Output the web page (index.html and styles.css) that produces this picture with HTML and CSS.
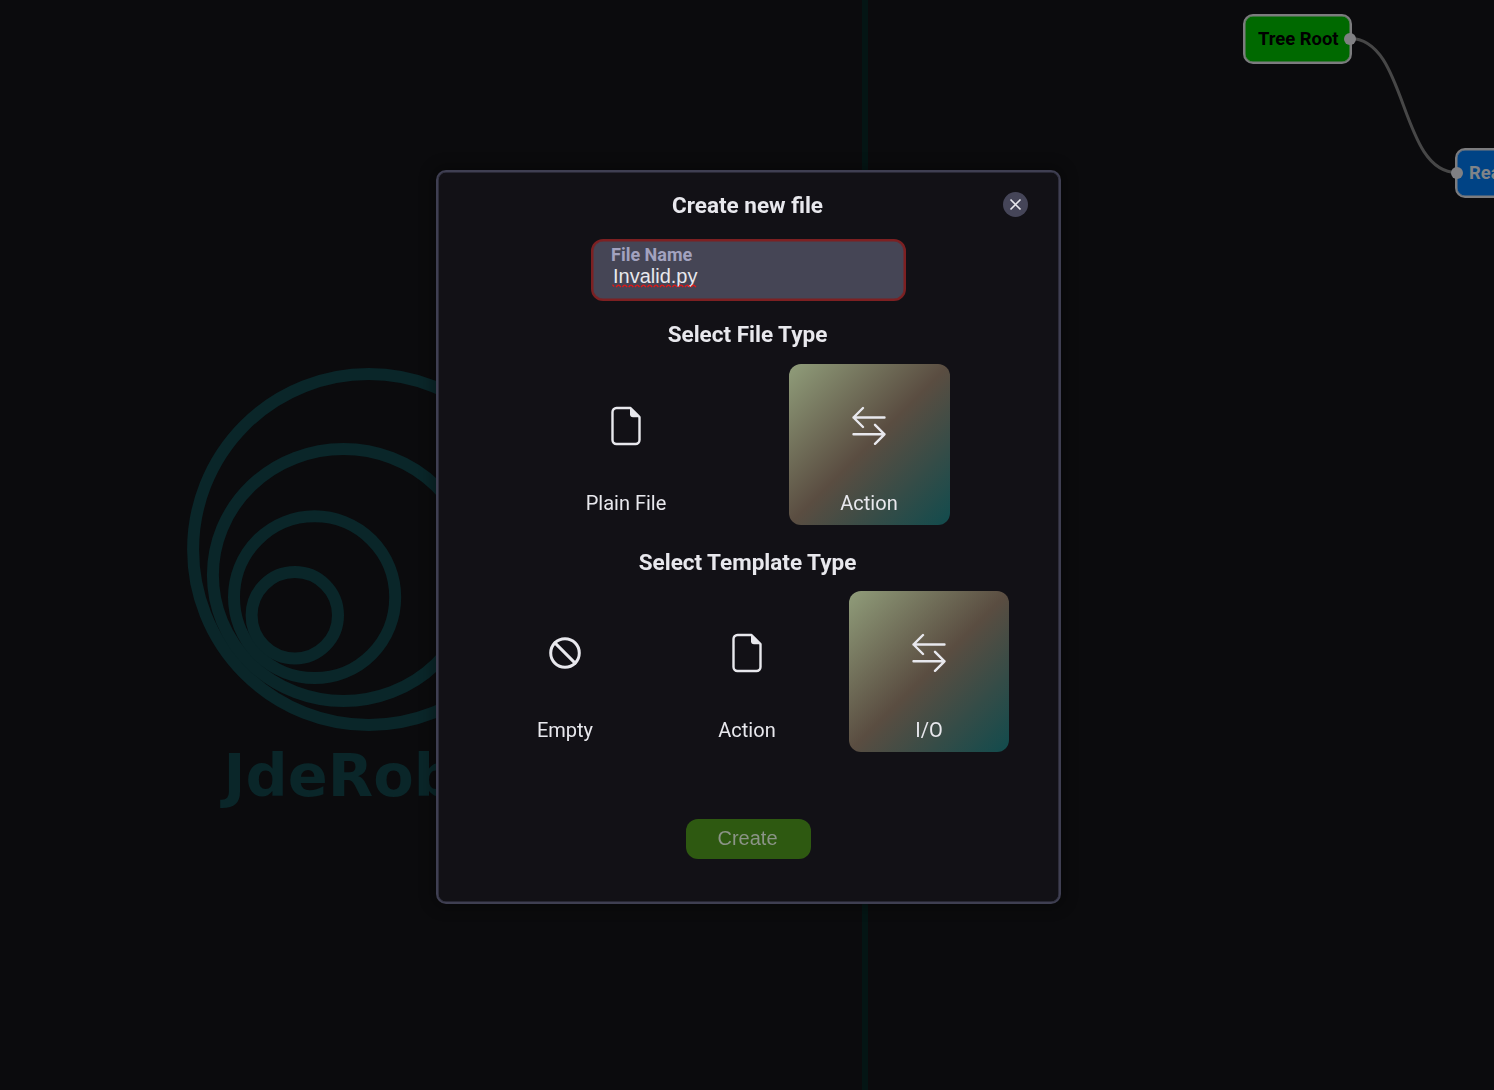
FILE: index.html
```html
<!DOCTYPE html>
<html lang="en">
<head>
<meta charset="utf-8">
<title>Create new file</title>
<link rel="stylesheet" href="styles.css">
</head>
<body>
<main class="workspace">
  <svg class="logo" viewBox="0 0 864 1090" width="864" height="1090">
    <g class="logo-rings">
      <ellipse cx="368.7" cy="549.5" rx="175.6" ry="175.5"/>
      <ellipse cx="343.5" cy="575" rx="130.6" ry="126"/>
      <ellipse cx="314.6" cy="597.2" rx="80.6" ry="80.9"/>
      <circle cx="294.8" cy="615.2" r="43.2"/>
    </g>
    <text class="logo-text" x="223.6" y="796.2">JdeRobot</text>
  </svg>
  <div class="divider"></div>
  <svg class="edges" viewBox="0 0 1494 1090" width="1494" height="1090">
    <path d="M1350 38.5C1408 38.500 1399 172.500 1457 172.500"/>
  </svg>
  <div class="node node-root">Tree Root</div>
  <div class="node node-action">ReadInput</div>
  <span class="port port-out"></span>
  <span class="port port-in"></span>
</main>

<div class="overlay">
  <form class="dialog">
    <header class="dialog-header">
      <h2 class="title">Create new file</h2>
      <button class="close" type="button" aria-label="Close">
        <svg width="13" height="13" viewBox="0 0 13 13"><path d="M1.500 1.500L11.500 11.500M11.500 1.500L1.500 11.500"/></svg>
      </button>
    </header>
    <div class="field">
      <span class="field-label">File Name</span>
      <span class="field-value">Invalid.py</span>
      <svg class="squiggle" width="85" height="4" viewBox="0 0 85 4"><path d="M0.500 .6l1.500 2M4.200 3.200q2.300-4.200 4.600 0m1.650 0q2.300-4.200 4.600 0m1.650 0q2.300-4.200 4.600 0m1.650 0q2.300-4.200 4.600 0m1.650 0q2.300-4.200 4.600 0m1.650 0q2.300-4.200 4.600 0m1.650 0q2.300-4.200 4.600 0m1.650 0q2.300-4.200 4.600 0m1.650 0q2.300-4.200 4.600 0m1.650 0q2.300-4.200 4.600 0m1.650 0q2.300-4.200 4.600 0m1.650 0q2.300-4.200 4.600 0m1.650 0q2.300-4.200 4.600 0"/></svg>
    </div>
    <h2 class="title title-file">Select File Type</h2>
    <div class="options options-two">
      <div class="option">
        <svg class="icon" width="40" height="40" viewBox="0 0 40 40"><path d="M10.500 2H24.500L33.500 11V34A4 4 0 0 1 29.500 38H10.500A4 4 0 0 1 6.500 34V6A4 4 0 0 1 10.500 2Z"/><path class="fold" d="M24 1.500L34 11.200H27A3 3 0 0 1 24 8.200Z"/></svg>
        <span>Plain File</span>
      </div>
      <div class="option selected">
        <svg class="icon" width="40" height="40" viewBox="0 0 40 40"><path d="M35.500 11.500H4.500M14 2L4.500 11.500L14 21M4.500 28.300H35.500M26 18.800L35.500 28.300L26 37.800"/></svg>
        <span>Action</span>
      </div>
    </div>
    <h2 class="title title-template">Select Template Type</h2>
    <div class="options options-three">
      <div class="option">
        <svg class="icon icon-empty" width="40" height="40" viewBox="0 0 40 40"><circle cx="20" cy="20" r="14.300"/><path d="M9.900 9.900L30.100 30.100"/></svg>
        <span>Empty</span>
      </div>
      <div class="option">
        <svg class="icon" width="40" height="40" viewBox="0 0 40 40"><path d="M10.500 2H24.500L33.500 11V34A4 4 0 0 1 29.500 38H10.500A4 4 0 0 1 6.500 34V6A4 4 0 0 1 10.500 2Z"/><path class="fold" d="M24 1.500L34 11.200H27A3 3 0 0 1 24 8.200Z"/></svg>
        <span>Action</span>
      </div>
      <div class="option selected">
        <svg class="icon" width="40" height="40" viewBox="0 0 40 40"><path d="M35.500 11.500H4.500M14 2L4.500 11.500L14 21M4.500 28.300H35.500M26 18.800L35.500 28.300L26 37.800"/></svg>
        <span>I/O</span>
      </div>
    </div>
    <button class="create" type="button">Create</button>
  </form>
</div>
</body>
</html>
```
FILE: styles.css
```css
* { box-sizing: border-box; }

body {
  margin: 0;
  height: 1090px;
  overflow: hidden;
  background: #0b0b0d;
  color: #e8e8ed;
  font-family: Roboto, sans-serif;
}

.workspace {
  position: relative;
  display: flex;
  width: 1494px;
  height: 1090px;
  overflow: hidden;
}

.logo { flex: none; margin-right: -2px; }
.logo-rings { fill: none; stroke: #0a2629; stroke-width: 12; }
.logo-text { fill: #0a2629; font: bold 59px "DejaVu Sans", sans-serif; }

.divider { flex: none; width: 6px; background: #041514; }

.edges { position: absolute; inset: 0; }
.edges path { fill: none; stroke: #474747; stroke-width: 3; }

.node {
  position: absolute;
  height: 50px;
  border: 2px solid #7c7c7e;
  border-radius: 10px;
  box-shadow: inset 0 0 0 .5px #7c7c7e;
  font-size: 18.4px;
  font-weight: 700;
  line-height: 46px;
  white-space: nowrap;
}
.node-root { left: 1243px; top: 14px; width: 109px; padding-left: 13px; background: #006900; color: #000; }
.node-action { left: 1455px; top: 148px; width: 130px; padding-left: 12px; background: #004385; color: #808488; }

.port { position: absolute; width: 12px; height: 12px; border-radius: 50%; background: #808083; }
.port-out { left: 1344px; top: 32.5px; }
.port-in { left: 1451px; top: 166.5px; }

.overlay {
  position: fixed;
  inset: 0;
  display: flex;
  justify-content: center;
  align-items: flex-start;
  padding: 170px 0 0 3px;
}

.dialog {
  display: flex;
  flex-direction: column;
  align-items: center;
  width: 625px;
  height: 734px;
  border: 2px solid #3f3f52;
  border-radius: 10px;
  background: #121116;
  box-shadow: inset 0 0 0 .6px #3f3f52, 0 0 14px 4px rgba(0, 0, 0, .3);
}

.dialog-header {
  display: grid;
  grid-template-columns: 1fr auto 1fr;
  align-items: center;
  width: 100%;
  height: 65px;
  margin-bottom: 2px;
  padding-right: 31px;
  padding-left: 31px;
}
.dialog-header .title { grid-column: 2; }

.title { margin: 0; padding-right: 2px; font-size: 22.5px; font-weight: 700; line-height: 28px; }

.close {
  display: grid;
  place-items: center;
  justify-self: end;
  width: 25px;
  height: 25px;
  padding: 0;
  border: 0;
  border-radius: 50%;
  background: #454558;
}
.close path { fill: none; stroke: #e8e8ed; stroke-width: 1.7; }

.field {
  display: flex;
  flex-direction: column;
  align-items: flex-start;
  width: 315px;
  height: 62px;
  padding: 3px 18px;
  border: 2px solid #7d2022;
  border-radius: 12px;
  box-shadow: inset 0 0 0 .5px #7d2022;
  background: #454555;
}
.field-label { color: #a2a2bf; font-size: 18px; font-weight: 700; line-height: 21px; }
.field-value { padding-left: 2px; font: 20px/22px "Liberation Sans", sans-serif; }
.squiggle { margin: -3px 0 0 1px; }
.squiggle path { fill: none; stroke: #df1919; stroke-width: 1.4; }

.title-file { margin-top: 19px; }
.title-template { margin-top: 23px; }

.options { display: grid; width: 100%; justify-content: center; }
.options-two { grid-template-columns: 161px 161px; column-gap: 82px; margin-top: 16px; padding-right: 2px; }
.options-three { grid-template-columns: repeat(3, 160px); column-gap: 22px; margin-top: 15px; padding-right: 3px; }

.option {
  display: flex;
  flex-direction: column;
  align-items: center;
  height: 161px;
  padding-top: 42.4px;
  border-radius: 12px;
  font-size: 20px;
  line-height: 24px;
}
.option span { margin-top: 44.6px; }
.selected { background: linear-gradient(135deg, #909d7a 0%, #5a4d41 50%, #114b4d 100%); }

.icon { fill: none; stroke: #e8e8ed; stroke-width: 2.4; stroke-linecap: round; stroke-linejoin: round; }
.icon .fold { fill: #e8e8ed; stroke: none; }
.icon-empty { stroke-width: 3; }

.create {
  width: 125px;
  height: 40px;
  margin-top: 67px;
  padding: 0 2px 2px 0;
  border: 0;
  border-radius: 12px;
  background: #2e5911;
  color: #8b9487;
  font: 20px "Liberation Sans", sans-serif;
}
```
